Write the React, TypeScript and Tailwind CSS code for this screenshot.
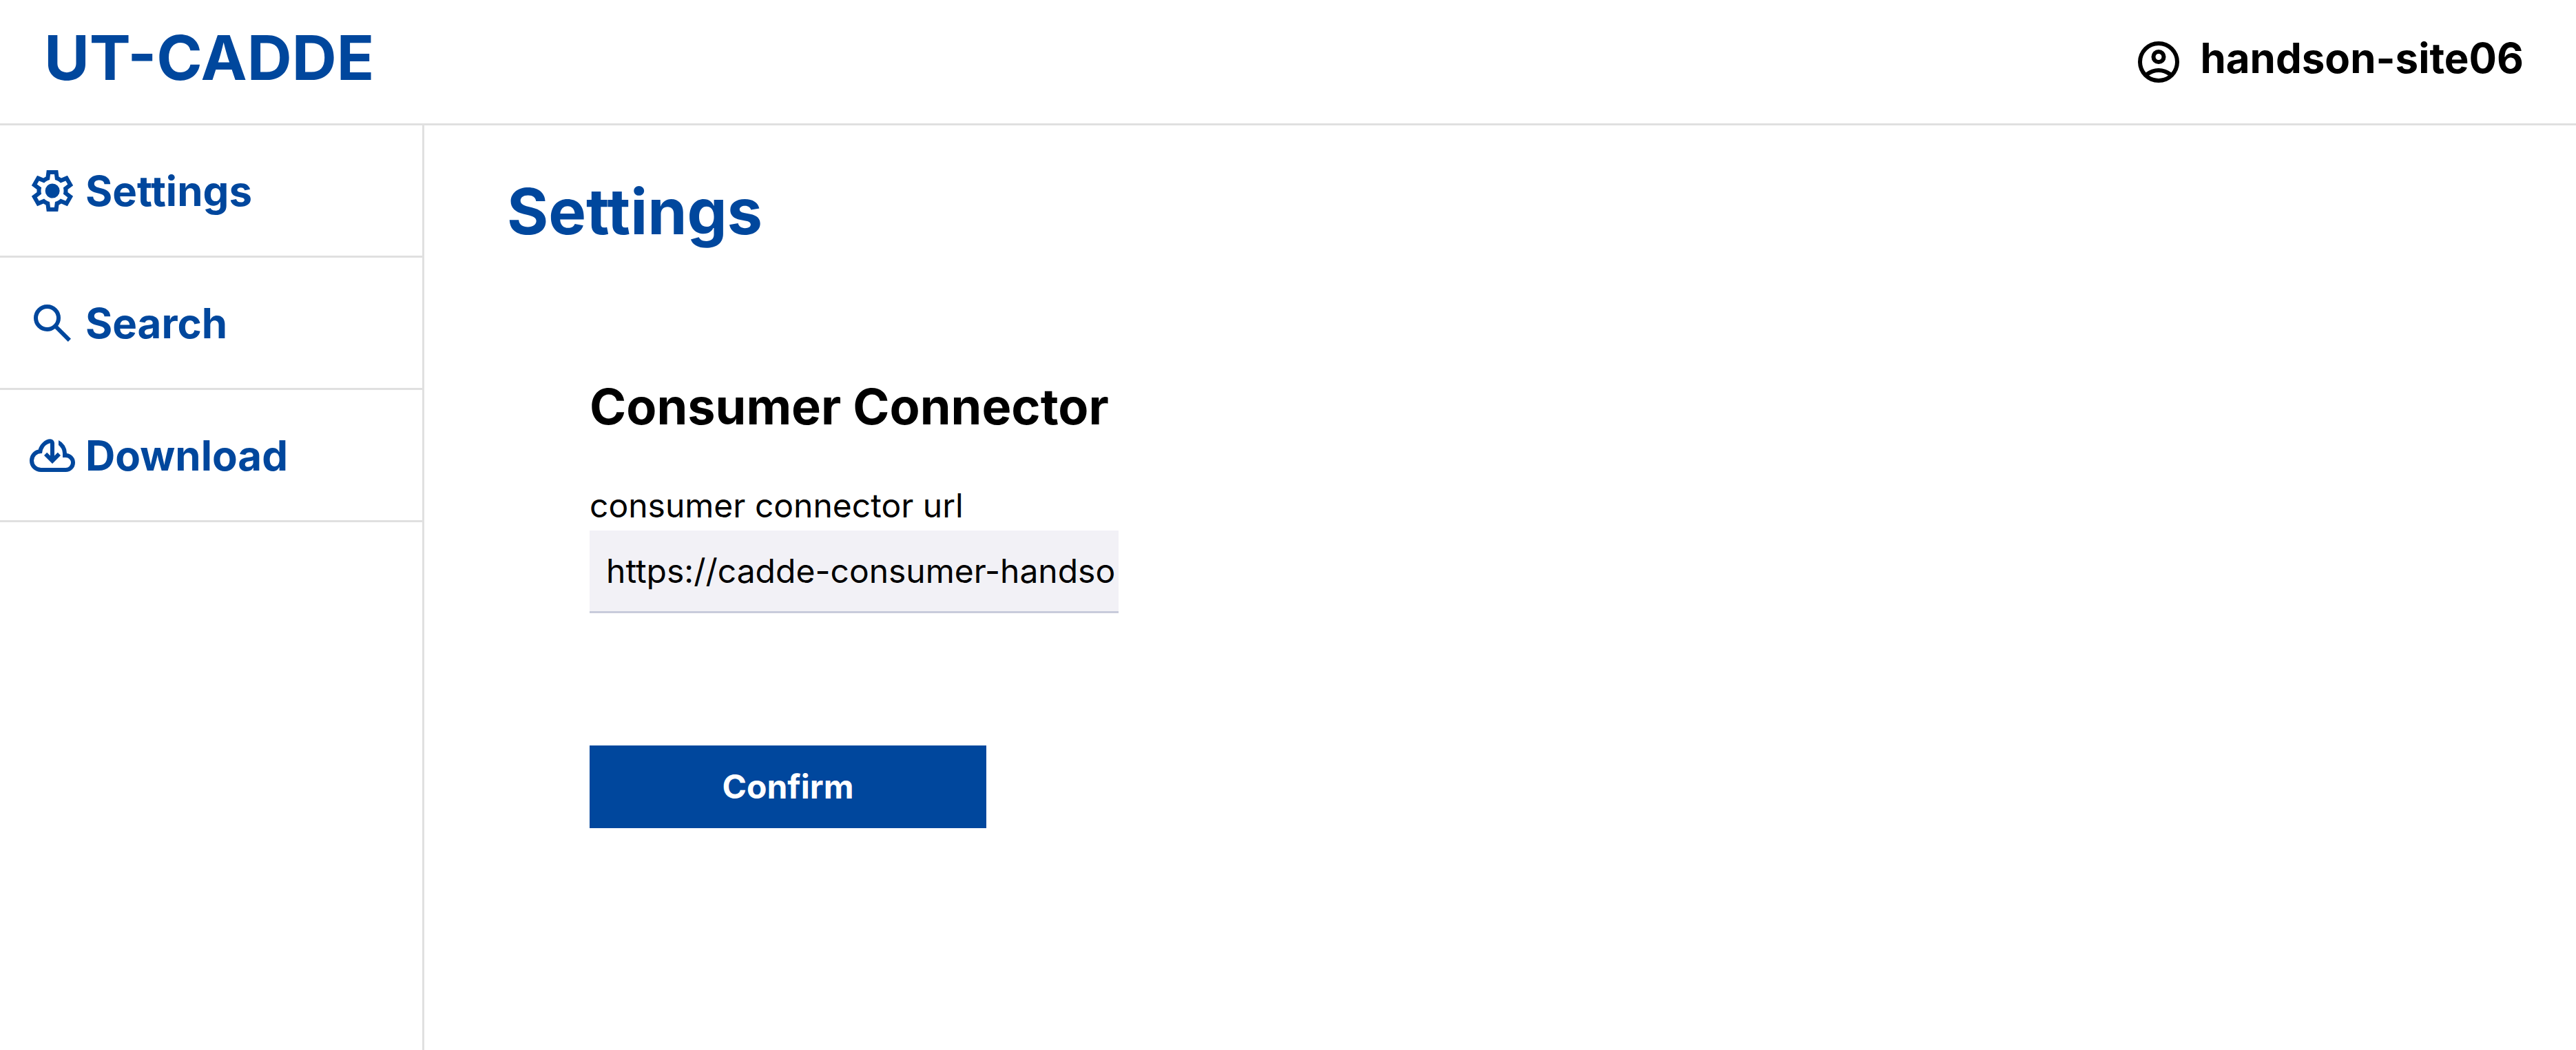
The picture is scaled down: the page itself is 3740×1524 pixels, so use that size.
import { useState } from "react";

const icons = {
  settings:
    "m370-80-16-128q-13-5-24.5-12T307-235l-119 50L78-375l103-78q-1-7-1-13.5v-27q0-6.5 1-13.5L78-585l110-190 119 50q11-8 23-15t24-12l16-128h220l16 128q13 5 24.5 12t22.5 15l119-50 110 190-103 78q1 7 1 13.5v27q0 6.5-2 13.5l103 78-110 190-118-50q-11 8-23 15t-24 12L590-80H370Zm70-80h79l14-106q31-8 57.5-23.5T639-327l99 41 39-68-86-65q5-14 7-29.5t2-31.5q0-16-2-31.5t-7-29.5l86-65-39-68-99 42q-22-23-48.5-38.5T533-694l-13-106h-79l-14 106q-31 8-57.5 23.5T321-633l-99-41-39 68 86 64q-5 15-7 30t-2 32q0 16 2 31t7 30l-86 65 39 68 99-42q22 23 48.5 38.5T427-266l13 106Zm42-180q58 0 99-41t41-99q0-58-41-99t-99-41q-59 0-99.5 41T342-480q0 58 40.5 99t99.5 41Z",
  search:
    "M784-120 532-372q-30 24-69 38t-83 14q-109 0-184.5-75.5T120-580q0-109 75.5-184.5T380-840q109 0 184.5 75.5T640-580q0 44-14 83t-38 69l252 252-56 56ZM380-400q75 0 127.5-52.5T560-580q0-75-52.5-127.5T380-760q-75 0-127.5 52.5T200-580q0 75 52.5 127.5T380-400Z",
  download:
    "M260-160q-91 0-155.5-63T40-377q0-78 47-139t123-78q17-72 85-137t145-65q33 0 56.5 23.5T520-716v242l64-62 56 56-160 160-160-160 56-56 64 62v-242q-76 14-118 73.5T280-520h-20q-58 0-99 41t-41 99q0 58 41 99t99 41h480q42 0 71-29t29-71q0-42-29-71t-71-29h-60v-80q0-48-22-89.5T600-680v-93q74 35 117 103.5T760-520q69 8 114.5 59.5T920-340q0 75-52.5 127.5T740-160H260Z",
  account:
    "M234-276q51-39 114-61.5T480-360q69 0 132 22.5T726-276q35-41 54.5-93T800-480q0-133-93.5-226.5T480-800q-133 0-226.5 93.5T160-480q0 59 19.5 111t54.5 93Zm246-164q-59 0-99.5-40.5T340-580q0-59 40.5-99.5T480-720q59 0 99.5 40.5T620-580q0 59-40.5 99.5T480-440Zm0 360q-83 0-156-31.5T197-197q-54-54-85.5-127T80-480q0-83 31.5-156T197-763q54-54 127-85.5T480-880q83 0 156 31.5T763-763q54 54 85.5 127T880-480q0 83-31.5 156T763-197q-54 54-127 85.5T480-80Zm0-80q53 0 100-15.5t86-44.5q-39-29-86-44.5T480-280q-53 0-100 15.5T294-220q39 29 86 44.5T480-160Zm0-360q26 0 43-17t17-43q0-26-17-43t-43-17q-26 0-43 17t-17 43q0 26 17 43t43 17Z",
};

function Icon({ name }: { name: keyof typeof icons }) {
  return (
    <svg viewBox="0 -960 960 960" className="size-[72px] shrink-0" fill="currentColor" aria-hidden="true">
      <path d={icons[name]} />
    </svg>
  );
}

function NavItem({ icon, label }: { icon: keyof typeof icons; label: string }) {
  return (
    <li className="border-b-3 border-[#e0e0e0]">
      <a
        href={"#" + label.toLowerCase()}
        className="flex h-[189px] items-center gap-3 pl-10 text-[60px] font-bold text-[#00479d]"
      >
        <Icon name={icon} />
        {label}
      </a>
    </li>
  );
}

export default function App() {
  const [url, setUrl] = useState("https://cadde-consumer-handson-site06.example.jp");

  return (
    <div className="flex min-h-screen flex-col bg-white font-['Inter',sans-serif] text-black">
      <header className="flex h-[182px] items-center justify-between border-b-3 border-[#e0e0e0] px-16">
        <a href="#home" className="pb-3 text-[90px] leading-none font-bold text-[#00479d]">
          UT-CADDE
        </a>
        <div className="flex items-center gap-6 pr-3">
          <Icon name="account" />
          <span className="pb-3 text-[60px] leading-none font-bold">handson-site06</span>
        </div>
      </header>
      <div className="flex flex-1">
        <nav className="w-[616px] shrink-0 border-r-3 border-[#e0e0e0]">
          <ul>
            <NavItem icon="settings" label="Settings" />
            <NavItem icon="search" label="Search" />
            <NavItem icon="download" label="Download" />
          </ul>
        </nav>
        <main className="flex-1 px-[120px] pt-[70px]">
          <h1 className="text-[92px] leading-[110px] font-bold text-[#00479d]">Settings</h1>
          <form className="flex flex-col items-start px-[120px] pt-[184px]" onSubmit={(e) => e.preventDefault()}>
            <h2 className="text-[72px] leading-[88px] font-bold">Consumer Connector</h2>
            <label htmlFor="connector-url" className="pt-16 text-[48px] leading-[72px]">
              consumer connector url
            </label>
            <input
              id="connector-url"
              type="text"
              value={url}
              onChange={(e) => setUrl(e.target.value)}
              className="h-[120px] w-[768px] border-b-3 border-[#c8cbdb] bg-[#f2f1f6] pr-1 pl-6 text-[48px] outline-none"
            />
            <button
              type="submit"
              className="mt-48 h-[120px] w-[576px] bg-[#00479d] text-[48px] font-bold text-white"
            >
              Confirm
            </button>
          </form>
        </main>
      </div>
    </div>
  );
}
